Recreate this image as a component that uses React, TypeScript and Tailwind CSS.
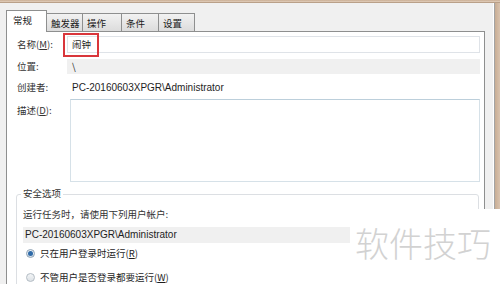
export default function App() {
  const cjk = '"Noto Sans CJK SC", "Liberation Sans", sans-serif';
  const tabs = [
    { label: "常规", w: "w-[41px]", active: true },
    { label: "触发器", w: "w-[36px]", active: false },
    { label: "操作", w: "w-[39px]", active: false },
    { label: "条件", w: "w-[37px]", active: false },
    { label: "设置", w: "w-[36px]", active: false },
  ];

  return (
    <div
      className="relative w-[500px] h-[284px] overflow-hidden bg-[#f0f0f0] text-[9.5px] text-[#1e1e1e] leading-none"
      style={{ fontFamily: cjk }}
    >
      {/* window frame top */}
      <div className="h-[3px] bg-gradient-to-b from-[#c9ad93] to-[#e2cfbd] border-b border-[#b9a089]" />

      <div className="flex">
        <div className="flex-1 pl-[6px] pt-[7px]">
          {/* Tabs */}
          <div className="flex items-end h-[21px] relative z-10">
            {tabs.map((t) =>
              t.active ? (
                <div
                  key={t.label}
                  className={`${t.w} h-[22px] -mb-px bg-white border border-b-0 border-[#8e8f8f] flex items-start justify-start pl-[6px] pt-[5px] text-[#1a1a1a]`}
                >
                  {t.label}
                </div>
              ) : (
                <div
                  key={t.label}
                  className={`${t.w} h-[18px] bg-gradient-to-b from-[#f2f2f2] to-[#dcdcdc] border border-l-0 border-b-0 border-[#8e8f8f] flex items-center pl-[4px] pt-[2px] text-[#1a1a1a]`}
                >
                  {t.label}
                </div>
              )
            )}
          </div>

          {/* Panel */}
          <div className="w-[479px] h-[260px] bg-white border border-[#8e8f8f] pl-[10px] pr-[4px] pt-[4px]">
            {/* Name */}
            <div className="flex items-center h-[17px]">
              <div className="w-[50px] text-[#333]">名称(<span className="underline">M</span>):</div>
              <div className="relative flex-1 h-[17px] border border-[#dfe3e8] flex items-center pl-[4px]">
                闹钟
                <div className="absolute -left-[5px] -top-[4px] w-[36px] h-[24px] border-2 border-[#d9363b]" />
              </div>
            </div>

            {/* Location */}
            <div className="flex items-center h-[15px] mt-[6px]">
              <div className="w-[50px] text-[#333]">位置:</div>
              <div className="flex-1 h-[15px] bg-[#f0f0f0] flex items-center pl-[5px]">\</div>
            </div>

            {/* Creator */}
            <div className="flex items-center h-[16px] mt-[6px]">
              <div className="w-[50px] text-[#333]">创建者:</div>
              <div className="flex-1 pl-[5px] text-[10px]" style={{ fontFamily: '"Liberation Sans", sans-serif' }}>
                PC-20160603XPGR\Administrator
              </div>
            </div>

            {/* Description */}
            <div className="flex items-start mt-[3px]">
              <div className="w-[53px] pt-[7px] text-[#333]">描述(<span className="underline">D</span>):</div>
              <div className="flex-1 h-[83px] border border-[#d6e1e8] border-t-[#bccfdb] bg-white" />
            </div>

            {/* Security options group */}
            <div className="relative mt-[12px] ml-[-1px] mr-[1px] border border-[#dcdfe3] rounded-[3px] h-[120px] pl-[6px] pr-[6px]">
              <div className="absolute -top-[6px] left-[4px] bg-white px-[2px] text-[#333]">安全选项</div>
              <div className="pt-[15px] text-[#333]">运行任务时，请使用下列用户帐户:</div>
              <div
                className="mt-[7px] h-[16px] bg-[#f0f0f0] flex items-center pl-[2px] text-[10px]"
                style={{ fontFamily: '"Liberation Sans", sans-serif' }}
              >
                PC-20160603XPGR\Administrator
              </div>
              <div className="flex items-center mt-[5px] h-[12px] gap-[5px] pl-[3px]">
                <span className="w-[9px] h-[9px] rounded-full border border-[#8fa3b5] bg-gradient-to-b from-[#eef3f7] to-[#d5dfe8] flex items-center justify-center">
                  <span className="w-[5px] h-[5px] rounded-full bg-[#2e6aa8]" />
                </span>
                <span>只在用户登录时运行(<span className="underline">R</span>)</span>
              </div>
              <div className="flex items-center mt-[12px] h-[12px] gap-[5px] pl-[3px]">
                <span className="w-[9px] h-[9px] rounded-full border border-[#b3bcc4] bg-gradient-to-b from-[#f3f5f7] to-[#dde2e6]" />
                <span>不管用户是否登录都要运行(<span className="underline">W</span>)</span>
              </div>
            </div>
          </div>
        </div>

        {/* window frame right */}
        <div className="flex h-[281px]">
          <div className="w-[8px]" />
          <div className="w-px bg-white" />
          <div className="w-px bg-[#a3a3a3]" />
          <div className="w-[6px] bg-gradient-to-r from-[#c8ad94] to-[#dcc7b4]" />
        </div>
      </div>

      {/* watermark */}
      <div className="absolute left-[350px] top-[209px] right-0 bottom-0 bg-white">
        <div className="pt-[17px] pl-[5px] text-[34px] font-light text-[#d2d2d2] leading-none">软件技巧</div>
      </div>
    </div>
  );
}
